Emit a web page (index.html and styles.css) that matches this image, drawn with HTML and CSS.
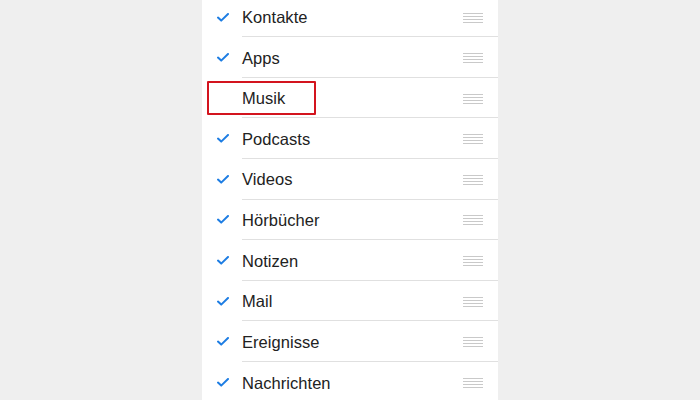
FILE: index.html
```html
<!DOCTYPE html>
<html lang="de">
<head>
<meta charset="utf-8">
<link rel="stylesheet" href="styles.css">
</head>
<body>
<div class="panel">
  <ul class="list">
    <li class="row"><span class="check"><svg viewBox="0 0 12 9" width="12" height="9"><path d="M1 4.6 L4.2 7.6 L11 1" /></svg></span><div class="content"><span class="label">Kontakte</span><span class="handle"><i></i><i></i><i></i><i></i></span></div></li>
    <li class="row"><span class="check"><svg viewBox="0 0 12 9" width="12" height="9"><path d="M1 4.6 L4.2 7.6 L11 1" /></svg></span><div class="content"><span class="label">Apps</span><span class="handle"><i></i><i></i><i></i><i></i></span></div></li>
    <li class="row"><span class="check"></span><div class="content"><span class="label">Musik</span><span class="handle"><i></i><i></i><i></i><i></i></span></div><span class="highlight"></span></li>
    <li class="row"><span class="check"><svg viewBox="0 0 12 9" width="12" height="9"><path d="M1 4.6 L4.2 7.6 L11 1" /></svg></span><div class="content"><span class="label">Podcasts</span><span class="handle"><i></i><i></i><i></i><i></i></span></div></li>
    <li class="row"><span class="check"><svg viewBox="0 0 12 9" width="12" height="9"><path d="M1 4.6 L4.2 7.6 L11 1" /></svg></span><div class="content"><span class="label">Videos</span><span class="handle"><i></i><i></i><i></i><i></i></span></div></li>
    <li class="row"><span class="check"><svg viewBox="0 0 12 9" width="12" height="9"><path d="M1 4.6 L4.2 7.6 L11 1" /></svg></span><div class="content"><span class="label">Hörbücher</span><span class="handle"><i></i><i></i><i></i><i></i></span></div></li>
    <li class="row"><span class="check"><svg viewBox="0 0 12 9" width="12" height="9"><path d="M1 4.6 L4.2 7.6 L11 1" /></svg></span><div class="content"><span class="label">Notizen</span><span class="handle"><i></i><i></i><i></i><i></i></span></div></li>
    <li class="row"><span class="check"><svg viewBox="0 0 12 9" width="12" height="9"><path d="M1 4.6 L4.2 7.6 L11 1" /></svg></span><div class="content"><span class="label">Mail</span><span class="handle"><i></i><i></i><i></i><i></i></span></div></li>
    <li class="row"><span class="check"><svg viewBox="0 0 12 9" width="12" height="9"><path d="M1 4.6 L4.2 7.6 L11 1" /></svg></span><div class="content"><span class="label">Ereignisse</span><span class="handle"><i></i><i></i><i></i><i></i></span></div></li>
    <li class="row"><span class="check"><svg viewBox="0 0 12 9" width="12" height="9"><path d="M1 4.6 L4.2 7.6 L11 1" /></svg></span><div class="content"><span class="label">Nachrichten</span><span class="handle"><i></i><i></i><i></i><i></i></span></div></li>
  </ul>
</div>
</body>
</html>
```
FILE: styles.css
```css
html, body {
  margin: 0;
  padding: 0;
  height: 100%;
  overflow: hidden;
}
body {
  background: #efefef;
  font-family: "Liberation Sans", Arial, sans-serif;
  color: #222;
}
.panel {
  width: 296px;
  margin: -3.3px auto 0;
  background: #fff;
  min-height: 420px;
}
.list {
  list-style: none;
  margin: 0;
  padding: 0;
}
.row {
  position: relative;
  display: flex;
  height: 40.6px;
}
.check {
  width: 40px;
  flex: none;
  display: flex;
  align-items: center;
  justify-content: flex-start;
  padding-left: 15px;
  box-sizing: border-box;
}
.check svg {
  display: block;
  fill: none;
  stroke: #1d7de3;
  stroke-width: 2;
  stroke-linecap: round;
  stroke-linejoin: round;
  margin-top: 0;
}
.content {
  flex: 1;
  display: flex;
  align-items: center;
  justify-content: space-between;
  border-bottom: 1px solid #e0e0e0;
  padding-right: 15px;
}
.row:last-child .content {
  border-bottom: none;
}
.label {
  font-size: 16.5px;
  padding-top: 2px;
  letter-spacing: 0.05px;
}
.handle {
  display: flex;
  flex-direction: column;
  gap: 2px;
  width: 20px;
  margin-top: 2px;
}
.handle i {
  display: block;
  height: 1px;
  background: #c9c9c9;
}
.highlight {
  position: absolute;
  left: 5px;
  top: 3.3px;
  width: 109px;
  height: 34px;
  box-sizing: border-box;
  border: 2px solid #d3141e;
  border-radius: 1px;
}
```
